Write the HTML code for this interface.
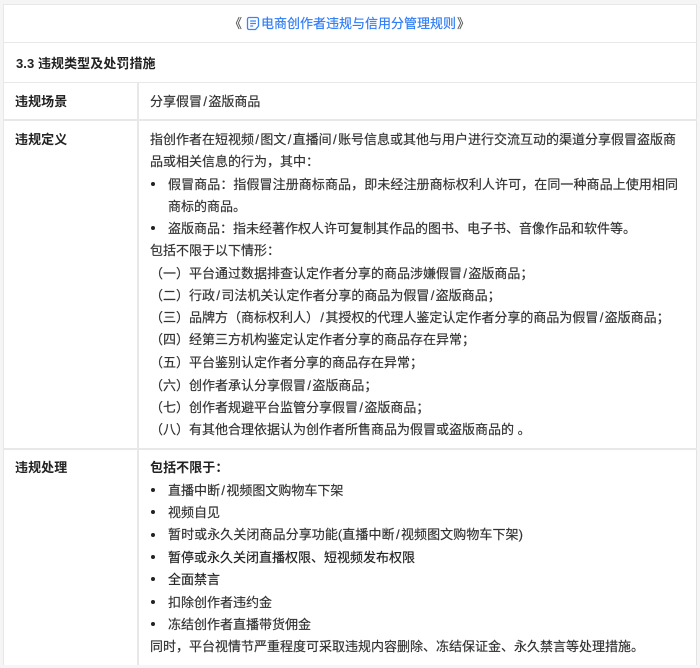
<!DOCTYPE html>
<html lang="zh-CN">
<head>
<meta charset="utf-8">
<style>
html,body{margin:0;padding:0;width:700px;height:668px;overflow:hidden;background:#f5f5f5}
body{position:relative;font-family:"Liberation Sans","Noto Sans CJK SC",sans-serif;font-size:13px;color:#333}
#t{position:absolute;left:3px;top:4px;width:693px;height:661px;background:#fff;border-right:1px solid #e2e2e2}
.h,.v{position:absolute;background:#e8e8e8}
.l{position:absolute;white-space:nowrap;line-height:20px;height:20px;-webkit-text-stroke:.18px currentColor}
.l.b{font-weight:700;color:#222;-webkit-text-stroke:0;letter-spacing:.07px}
.d{position:absolute;width:4px;height:4px;border-radius:50%;background:#222;left:151px}
a{color:#2f7cf6;text-decoration:none}
s{text-decoration:none;padding:0 1.35px}
</style>
</head>
<body>
<div id="t"></div>
<div class="h" style="left:3px;top:4px;width:694px;height:1px"></div>
<div class="h" style="left:3px;top:42px;width:694px;height:1px"></div>
<div class="h" style="left:3px;top:82px;width:694px;height:1px"></div>
<div class="h" style="left:3px;top:119px;width:694px;height:2px"></div>
<div class="h" style="left:3px;top:448px;width:694px;height:2px"></div>
<div class="v" style="left:3px;top:4px;width:1px;height:661px"></div>
<div class="v" style="left:137px;top:82px;width:1.5px;height:583px"></div>

<div class="l" style="left:229px;top:14px;color:#555">《</div>
<svg style="position:absolute;left:246px;top:16px" width="14" height="15" viewBox="0 0 14 15" fill="none" stroke="#3d83f7" stroke-width="1.3"><path d="M3 1.500h8a1.500 1.500 0 0 1 1.500 1.500v7l-3 3.500H3a1.500 1.500 0 0 1-1.500-1.500V3A1.500 1.500 0 0 1 3 1.500z"/><path d="M4.200 5h5.800M4.200 7.500h5.800M4.200 10h3"/></svg>
<div class="l" style="left:261px;top:14px"><a>电商创作者违规与信用分管理规则</a></div>
<div class="l" style="left:457px;top:14px;color:#555">》</div>

<div class="l b" style="left:16px;top:54px">3.3 违规类型及处罚措施</div>
<div class="l b" style="left:15px;top:92px">违规场景</div>
<div class="l" style="left:150px;top:92px">分享假冒<s>/</s>盗版商品</div>
<div class="l b" style="left:15px;top:130px">违规定义</div>

<div class="l" style="left:150px;top:130px">指创作者在短视频<s>/</s>图文<s>/</s>直播间<s>/</s>账号信息或其他与用户进行交流互动的渠道分享假冒盗版商</div>
<div class="l" style="left:150px;top:152px">品或相关信息的行为，其中：</div>
<div class="d" style="top:181.500px"></div>
<div class="l" style="left:168px;top:175px;letter-spacing:.08px">假冒商品：指假冒注册商标商品，即未经注册商标权利人许可，在同一种商品上使用相同</div>
<div class="l" style="left:168px;top:197px">商标的商品。</div>
<div class="d" style="top:225.500px"></div>
<div class="l" style="left:168px;top:219px">盗版商品：指未经著作权人许可复制其作品的图书、电子书、音像作品和软件等。</div>
<div class="l" style="left:150px;top:241px">包括不限于以下情形：</div>
<div class="l" style="left:150px;top:264px">（一）平台通过数据排查认定作者分享的商品涉嫌假冒<s>/</s>盗版商品；</div>
<div class="l" style="left:150px;top:286px">（二）行政<s>/</s>司法机关认定作者分享的商品为假冒<s>/</s>盗版商品；</div>
<div class="l" style="left:150px;top:308px">（三）品牌方（商标权利人）<s>/</s>其授权的代理人鉴定认定作者分享的商品为假冒<s>/</s>盗版商品；</div>
<div class="l" style="left:150px;top:330px">（四）经第三方机构鉴定认定作者分享的商品存在异常；</div>
<div class="l" style="left:150px;top:353px">（五）平台鉴别认定作者分享的商品存在异常；</div>
<div class="l" style="left:150px;top:376px">（六）创作者承认分享假冒<s>/</s>盗版商品；</div>
<div class="l" style="left:150px;top:398px">（七）创作者规避平台监管分享假冒<s>/</s>盗版商品；</div>
<div class="l" style="left:150px;top:420px">（八）有其他合理依据认为创作者所售商品为假冒或盗版商品的 。</div>

<div class="l b" style="left:15px;top:458px">违规处理</div>
<div class="l b" style="left:150px;top:458px">包括不限于：</div>
<div class="d" style="top:487.500px"></div>
<div class="l" style="left:168px;top:481px">直播中断<s>/</s>视频图文购物车下架</div>
<div class="d" style="top:510px"></div>
<div class="l" style="left:168px;top:503px">视频自见</div>
<div class="d" style="top:532.500px"></div>
<div class="l" style="left:168px;top:525px;letter-spacing:.07px">暂时或永久关闭商品分享功能(直播中断<s>/</s>视频图文购物车下架)</div>
<div class="d" style="top:555px"></div>
<div class="l" style="left:168px;top:548px;color:#222">暂停或永久关闭直播权限、短视频发布权限</div>
<div class="d" style="top:577px"></div>
<div class="l" style="left:168px;top:570px;color:#222">全面禁言</div>
<div class="d" style="top:600px"></div>
<div class="l" style="left:168px;top:593px">扣除创作者违约金</div>
<div class="d" style="top:622px"></div>
<div class="l" style="left:168px;top:615px">冻结创作者直播带货佣金</div>
<div class="l" style="left:150px;top:637px">同时，平台视情节严重程度可采取违规内容删除、冻结保证金、永久禁言等处理措施。</div>
</body>
</html>
